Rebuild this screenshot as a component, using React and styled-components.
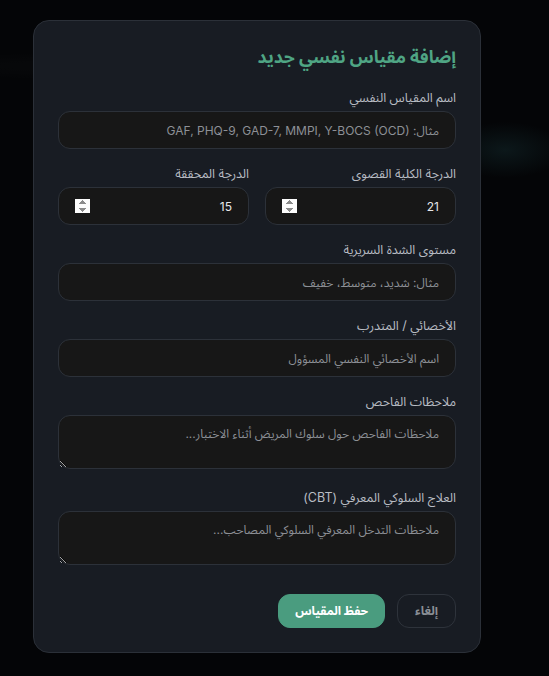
import React, { useState } from 'react';
import styled, { createGlobalStyle } from 'styled-components';

const GlobalStyle = createGlobalStyle`
  html, body {
    margin: 0;
    padding: 0;
    height: 100%;
  }
  body {
    background:
      radial-gradient(ellipse 60px 28px at 505px 150px, rgba(40, 90, 95, 0.22), transparent 100%),
      radial-gradient(ellipse 300px 14px at 120px 66px, rgba(255, 255, 255, 0.02), transparent 100%),
      #040507;
    font-family: Inter, "Noto Sans Arabic", sans-serif;
  }
`;

const Overlay = styled.div`
  min-height: 676px;
  padding: 20px 0 0 33px;
  box-sizing: border-box;
`;

const Card = styled.form`
  width: 448px;
  box-sizing: border-box;
  background: #181c23;
  border: 1px solid #2b3038;
  border-radius: 16px;
  padding: 22px 24px 24px;
  direction: rtl;
  display: flex;
  flex-direction: column;
`;

const Title = styled.h2`
  margin: 0 0 18px;
  font-size: 17.5px;
  line-height: 28px;
  font-weight: 700;
  color: #4fa584;
`;

const Fields = styled.div`
  display: flex;
  flex-direction: column;
  gap: 16px;
`;

const Row = styled.div`
  display: grid;
  grid-template-columns: 1fr 1fr;
  gap: 16px;
`;

const Field = styled.div`
  display: flex;
  flex-direction: column;
`;

const Label = styled.label`
  font-size: 12.5px;
  line-height: 17px;
  color: #b9bdc4;
  margin-bottom: 5px;
`;

const Input = styled.input`
  box-sizing: border-box;
  height: 38px;
  width: 100%;
  background: #171717;
  border: 1px solid #2c3139;
  border-radius: 12px;
  padding: 0 16px;
  color: #e6e7e9;
  font-family: inherit;
  font-size: 12px;
  outline: none;
  &::placeholder {
    color: #8d9096;
  }
  &::-webkit-inner-spin-button {
    opacity: 1;
  }
`;

const TextArea = styled.textarea`
  box-sizing: border-box;
  height: 54px;
  width: 100%;
  margin-bottom: 4px;
  background: #171717;
  border: 1px solid #2c3139;
  border-radius: 12px;
  padding: 9px 16px;
  color: #e6e7e9;
  font-family: inherit;
  font-size: 12px;
  line-height: 18px;
  outline: none;
  &::placeholder {
    color: #8d9096;
  }
`;

const Footer = styled.div`
  display: flex;
  gap: 12px;
  margin-top: 25px;
`;

const Button = styled.button`
  box-sizing: border-box;
  height: 34px;
  border-radius: 12px;
  font-family: inherit;
  font-size: 12px;
  font-weight: 700;
  cursor: pointer;
  padding: 0 ${(p) => (p.$primary ? '16px' : '17px')};
  background: ${(p) => (p.$primary ? '#4a9c7f' : 'transparent')};
  color: ${(p) => (p.$primary ? '#ffffff' : '#8b8f96')};
  border: 1px solid ${(p) => (p.$primary ? '#4a9c7f' : '#2e333b')};
`;

function App() {
  const [maxScore, setMaxScore] = useState('21');
  const [score, setScore] = useState('15');

  return (
    <>
      <GlobalStyle />
      <Overlay>
        <Card onSubmit={(e) => e.preventDefault()}>
          <Title>إضافة مقياس نفسي جديد</Title>
          <Fields>
            <Field>
              <Label htmlFor="name">اسم المقياس النفسي</Label>
              <Input id="name" placeholder="مثال: GAF, PHQ-9, GAD-7, MMPI, Y-BOCS (OCD)" />
            </Field>
            <Row>
              <Field>
                <Label htmlFor="max">الدرجة الكلية القصوى</Label>
                <Input id="max" type="number" value={maxScore} onChange={(e) => setMaxScore(e.target.value)} />
              </Field>
              <Field>
                <Label htmlFor="score">الدرجة المحققة</Label>
                <Input id="score" type="number" value={score} onChange={(e) => setScore(e.target.value)} />
              </Field>
            </Row>
            <Field>
              <Label htmlFor="severity">مستوى الشدة السريرية</Label>
              <Input id="severity" placeholder="مثال: شديد، متوسط، خفيف" />
            </Field>
            <Field>
              <Label htmlFor="specialist">الأخصائي / المتدرب</Label>
              <Input id="specialist" placeholder="اسم الأخصائي النفسي المسؤول" />
            </Field>
            <Field>
              <Label htmlFor="notes">ملاحظات الفاحص</Label>
              <TextArea id="notes" placeholder="ملاحظات الفاحص حول سلوك المريض أثناء الاختبار..." />
            </Field>
            <Field>
              <Label htmlFor="cbt">العلاج السلوكي المعرفي (CBT)</Label>
              <TextArea id="cbt" placeholder="ملاحظات التدخل المعرفي السلوكي المصاحب..." />
            </Field>
          </Fields>
          <Footer>
            <Button type="button">إلغاء</Button>
            <Button type="submit" $primary>حفظ المقياس</Button>
          </Footer>
        </Card>
      </Overlay>
    </>
  );
}

export default App;
